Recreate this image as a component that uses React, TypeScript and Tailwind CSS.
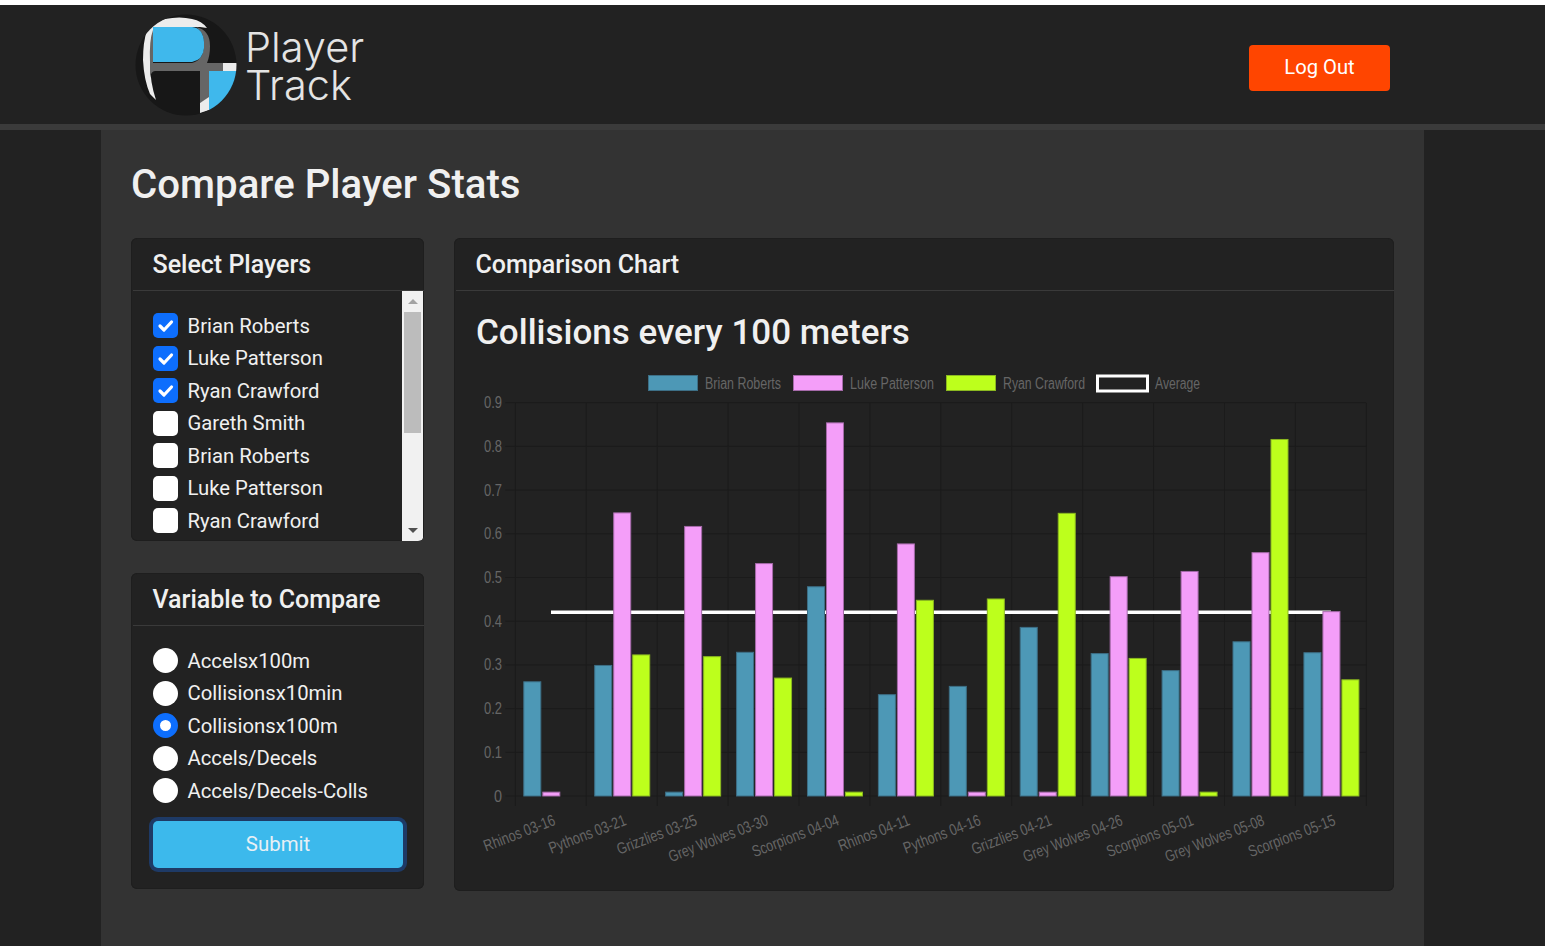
import React from "react";

const players = [
  ["Brian Roberts", true],
  ["Luke Patterson", true],
  ["Ryan Crawford", true],
  ["Gareth Smith", false],
  ["Brian Roberts", false],
  ["Luke Patterson", false],
  ["Ryan Crawford", false],
] as const;

const variables = ["Accelsx100m", "Collisionsx10min", "Collisionsx100m", "Accels/Decels", "Accels/Decels-Colls"];

const cats: [string, number, number, number, number][] = [
  ["Rhinos 03-16", 0.2625, 0.01, 0, 73],
  ["Pythons 03-21", 0.3, 0.649, 0.324, 79],
  ["Grizzlies 03-25", 0.01, 0.618, 0.32, 82],
  ["Grey Wolves 03-30", 0.33, 0.533, 0.271, 102],
  ["Scorpions 04-04", 0.48, 0.855, 0.01, 89],
  ["Rhinos 04-11", 0.233, 0.578, 0.449, 73],
  ["Pythons 04-16", 0.252, 0.01, 0.452, 79],
  ["Grizzlies 04-21", 0.387, 0.01, 0.648, 82],
  ["Grey Wolves 04-26", 0.327, 0.503, 0.316, 102],
  ["Scorpions 05-01", 0.288, 0.515, 0.01, 89],
  ["Grey Wolves 05-08", 0.354, 0.558, 0.817, 102],
  ["Scorpions 05-15", 0.329, 0.423, 0.267, 89],
];

// chart coordinates are relative to the svg, whose origin sits at page (456, 365)
const X0 = 59.3;
const STEP = 70.92;
const Y0 = 431;
const UNIT = 437;
const FONT = "'Liberation Sans', Arial, sans-serif";

function Chart() {
  const bar = (x: number, v: number, fill: string, stroke: string, k: string) =>
    v > 0 ? (
      <rect key={k} x={x + 0.5} y={Y0 - v * UNIT + 0.5} width={17} height={v * UNIT - 0.5} fill={fill} stroke={stroke} strokeWidth={1} />
    ) : null;
  return (
    <svg width={936} height={525} className="block">
      {Array.from({ length: 13 }).map((_, i) => (
        <line key={i} x1={X0 + i * STEP} x2={X0 + i * STEP} y1={38} y2={441} stroke="#1b1b1b" />
      ))}
      {Array.from({ length: 10 }).map((_, i) => (
        <g key={i}>
          <line x1={X0 - 10} x2={X0 + 12 * STEP} y1={Y0 - i * 43.7} y2={Y0 - i * 43.7} stroke="#1b1b1b" />
          <text
            x={46}
            y={Y0 - i * 43.7 + 5.5}
            textAnchor="end"
            fontFamily={FONT}
            fontSize={16}
            fill="#666666"
            textLength={i === 0 ? 8 : 18}
            lengthAdjust="spacingAndGlyphs"
          >
            {i === 0 ? "0" : `0.${i}`}
          </text>
        </g>
      ))}
      <rect x={95} y={245.5} width={780} height={3.5} fill="#ffffff" />
      {cats.map(([name, a, b, c, w], i) => {
        const x = X0 + i * STEP;
        return (
          <g key={name + i}>
            {bar(x + 8, a, "#4d98b6", "#3d6f86", "a")}
            {bar(x + 27, b, "#f49ef9", "#a56aa9", "b")}
            {bar(x + 46, c, "#bdff1c", "#8bb820", "c")}
            <text
              transform={`translate(${x + 41},${459.5}) rotate(-21)`}
              textAnchor="end"
              fontFamily={FONT}
              fontSize={16}
              fill="#666666"
              textLength={w * 1.03}
              lengthAdjust="spacingAndGlyphs"
            >
              {name}
            </text>
          </g>
        );
      })}
      {[
        [192, "#4d98b6", "#3d6f86", "Brian Roberts", 249, 76],
        [337, "#f49ef9", "#a56aa9", "Luke Patterson", 394, 84],
        [490, "#bdff1c", "#8bb820", "Ryan Crawford", 547, 82],
      ].map(([x, f, s, t, tx, tw]) => (
        <g key={t as string}>
          <rect x={(x as number) + 0.5} y={10.5} width={49} height={15} fill={f as string} stroke={s as string} />
          <text x={tx as number} y={23.5} fontFamily={FONT} fontSize={16} fill="#666666" textLength={tw as number} lengthAdjust="spacingAndGlyphs">
            {t as string}
          </text>
        </g>
      ))}
      <rect x={641.5} y={11} width={50} height={15} fill="none" stroke="#ffffff" strokeWidth={3} />
      <text x={699} y={23.5} fontFamily={FONT} fontSize={16} fill="#666666" textLength={45} lengthAdjust="spacingAndGlyphs">
        Average
      </text>
    </svg>
  );
}

function Logo() {
  return (
    <svg width={104} height={104} viewBox="133 13 104 104" className="block shrink-0">
      <defs>
        <clipPath id="lc">
          <circle cx={186} cy={65} r={50.5} />
        </clipPath>
      </defs>
      <circle cx={186} cy={65} r={50.5} fill="#171717" />
      <g clipPath="url(#lc)">
        <path d="M147 30 Q154 22 165 19 Q180 16 192 19 Q202 21 207 28 L200 27 H153 V63 H150 Q150 82 156 100 L150 94 Q144 80 143 60 Q143 42 147 30 Z" fill="#ececec" />
        <path d="M150 63 Q149 40 153 30 V63 H192 V71 H155 Q151 71 150 78 Z" fill="#666666" />
        <path d="M196 27 Q210 30 210 46 Q210 56 207 63 H223 V71 H209 V100 L200 103 V71 H150 V63 H192 Q204 60 204 44 Q204 32 196 27 Z" fill="#666666" />
        <path d="M153 27 H192 Q203 28 204 42 V48 Q203 60 192 62 H153 Z" fill="#3fb8ec" />
        <rect x={223} y={63} width={15} height={8} fill="#ececec" />
        <path d="M209 71 H240 V125 H209 Z" fill="#3fb8ec" />
        <path d="M209 97 V110 L200 113 V103 Z" fill="#ececec" />
      </g>
    </svg>
  );
}

function Check() {
  return (
    <svg width={25} height={25} viewBox="0 0 25 25" className="block">
      <path d="M7 13 L11 17 L18.5 9" fill="none" stroke="#ffffff" strokeWidth={3.2} strokeLinecap="round" strokeLinejoin="round" />
    </svg>
  );
}

function CardHeader({ title }: { title: string }) {
  return (
    <div className="h-[53px] ml-[2px] pl-[19.5px] pt-[1px] border-b border-[#3a3a3a] text-[25px] font-medium leading-[52px] text-[#f0f0f0]">
      {title}
    </div>
  );
}

function Row({ children, label }: { children: React.ReactNode; label: string }) {
  return (
    <div className="flex items-center h-[25px] gap-[9.5px] mb-[7.5px]">
      {children}
      <span className="text-[20.3px] leading-[25px] pt-[1px] text-[#f0f0f0]">{label}</span>
    </div>
  );
}

export default function App() {
  return (
    <div className="h-[946px] overflow-hidden bg-[#222222] border-t-[5px] border-white" style={{ fontFamily: "Roboto, 'Liberation Sans', sans-serif" }}>
      <header className="h-[125px] border-b-[6px] border-[#3b3b3b] flex items-center justify-between pl-[133px] pr-[155px]">
        <div className="flex items-center">
          <Logo />
          <div className="ml-[8px] pt-[2px] text-[41.5px] leading-[38px] font-light text-[#e4e4e4]" style={{ fontFamily: "Inter, sans-serif" }}>
            <div>Player</div>
            <div>Track</div>
          </div>
        </div>
        <button className="w-[141px] h-[46px] rounded bg-[#ff4500] text-white text-[20.2px] mt-[6px]">Log Out</button>
      </header>
      <main className="ml-[101px] w-[1323px] h-[816px] bg-[#333333] pl-[30px] pt-[29px]">
        <h1 className="text-[40.2px] leading-[52px] font-medium text-[#f0f0f0]">Compare Player Stats</h1>
        <div className="flex gap-[30px] mt-[27px]">
          <div className="w-[293px] flex flex-col gap-[32px]">
            <section className="h-[303px] rounded-md bg-[#222222] relative overflow-hidden ring-1 ring-inset ring-[#1e1e1e]">
              <CardHeader title="Select Players" />
              <div className="flex h-[250px]">
                <div className="flex-1 pl-[22px] pt-[22px] overflow-hidden">
                  {players.map(([name, on], i) => (
                    <Row key={i} label={name}>
                      <div className={`w-[25px] h-[25px] rounded-[5px] ${on ? "bg-[#0d6efd]" : "bg-white"}`}>{on && <Check />}</div>
                    </Row>
                  ))}
                </div>
                <div className="w-[21px] mr-[1px] bg-[#f1f1f1] flex flex-col items-center">
                  <div className="h-[21px] w-full flex items-center justify-center">
                    <div className="w-0 h-0 border-x-[5px] border-x-transparent border-b-[5px] border-b-[#a3a3a3]" />
                  </div>
                  <div className="w-[17px] h-[121px] bg-[#bcbcbc]" />
                  <div className="flex-1" />
                  <div className="h-[21px] w-full flex items-center justify-center">
                    <div className="w-0 h-0 border-x-[5px] border-x-transparent border-t-[5px] border-t-[#505050]" />
                  </div>
                </div>
              </div>
            </section>
            <section className="h-[316px] rounded-md bg-[#222222] ring-1 ring-inset ring-[#1e1e1e]">
              <CardHeader title="Variable to Compare" />
              <div className="pl-[22px] pt-[22px]">
                {variables.map((v, i) => (
                  <Row key={v} label={v}>
                    {i === 2 ? (
                      <div className="w-[25px] h-[25px] rounded-full bg-white border-[7px] border-[#0d6efd]" />
                    ) : (
                      <div className="w-[25px] h-[25px] rounded-full bg-white" />
                    )}
                  </Row>
                ))}
                <button className="block mt-[18px] w-[250px] h-[47px] rounded-[5px] bg-[#3cb9ec] text-[#e8f0f5] text-[20.4px] ring-4 ring-[#1e3a66]">
                  Submit
                </button>
              </div>
            </section>
          </div>
          <section className="w-[940px] h-[653px] rounded-md bg-[#222222] ring-1 ring-inset ring-[#1e1e1e]">
            <CardHeader title="Comparison Chart" />
            <div className="ml-[2px]">
              <h2 className="pl-[20px] pt-[19px] h-[74px] text-[35px] leading-[46px] font-medium text-[#f0f0f0]">Collisions every 100 meters</h2>
              <Chart />
            </div>
          </section>
        </div>
      </main>
    </div>
  );
}
